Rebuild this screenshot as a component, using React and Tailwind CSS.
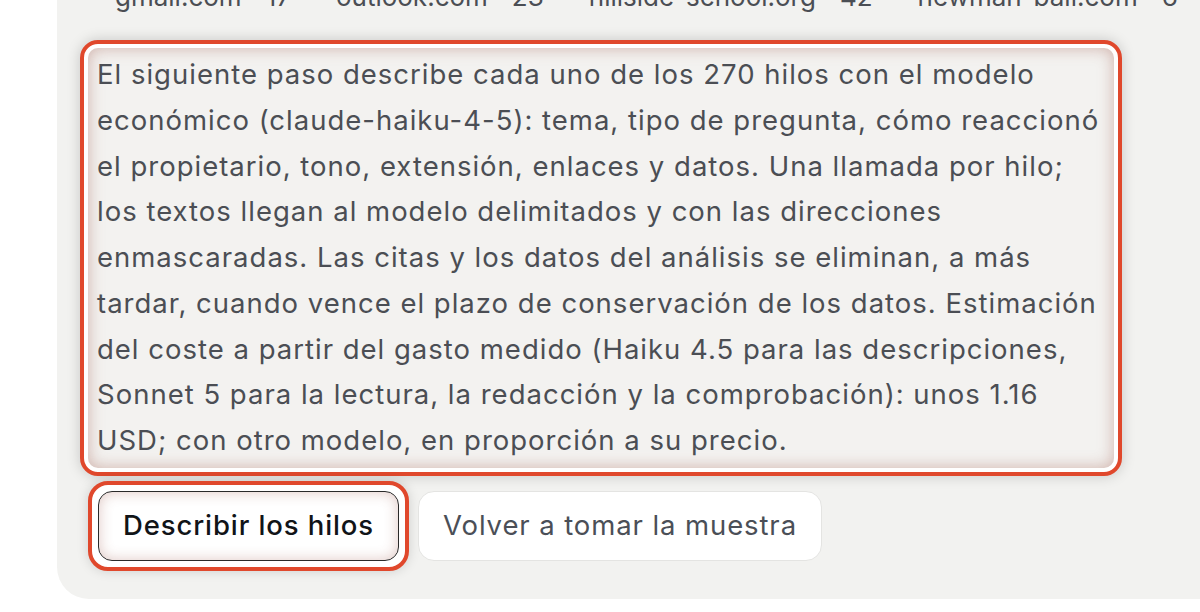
import React from 'react';

const domains = [
  { name: 'gmail.com', count: 17 },
  { name: 'outlook.com', count: 23 },
  { name: 'hillside-school.org', count: 42 },
  { name: 'newman-ball.com', count: 6 },
];

const lines = [
  'El siguiente paso describe cada uno de los 270 hilos con el modelo',
  'económico (claude-haiku-4-5): tema, tipo de pregunta, cómo reaccionó',
  'el propietario, tono, extensión, enlaces y datos. Una llamada por hilo;',
  'los textos llegan al modelo delimitados y con las direcciones',
  'enmascaradas. Las citas y los datos del análisis se eliminan, a más',
  'tardar, cuando vence el plazo de conservación de los datos. Estimación',
  'del coste a partir del gasto medido (Haiku 4.5 para las descripciones,',
  'Sonnet 5 para la lectura, la redacción y la comprobación): unos 1.16',
  'USD; con otro modelo, en proporción a su precio.',
];

export default function App() {
  return (
    <div className="h-[612px] overflow-hidden bg-white pl-[57px] font-['Inter',sans-serif]">
      <div className="bg-[#f2f2f0] rounded-bl-[32px] pl-[23px] pb-[28px]">
        {/* fila de dominios, cortada arriba */}
        <div className="-mt-[26px] flex items-center gap-[45px] pl-[35px] text-[26px] leading-[46px] text-[#4b4e54] whitespace-nowrap">
          {domains.map(d => (
            <div key={d.name} className="flex items-center gap-[24px]">
              <span>{d.name}</span>
              <span>{d.count}</span>
            </div>
          ))}
        </div>

        {/* bloque resaltado */}
        <div className="mt-[20px] w-[1042px] rounded-[18px] border-4 border-[#e0482c] bg-white p-[4px] shadow-[0_0_14px_rgba(0,0,0,0.18)]">
          <div className="rounded-[10px] bg-[#f3f2f0] pl-[9px] pt-[4px] pb-[4px] shadow-[inset_0_0_16px_rgba(150,70,55,0.38)] text-[27.5px] tracking-[1px] leading-[45.75px] text-[#4b4e54] whitespace-nowrap">
            {lines.map((l, i) => <div key={i}>{l}</div>)}
          </div>
        </div>

        {/* botones */}
        <div className="mt-[5px] ml-[8px] flex items-center gap-[9px]">
          <div className="rounded-[20px] border-4 border-[#e0482c] bg-white p-[6px] shadow-[0_0_12px_rgba(0,0,0,0.15)]">
            <button className="h-[70px] w-[301px] rounded-[14px] border-[1.5px] border-[#2a2a2a] bg-white text-[27.5px] tracking-[0.9px] font-medium text-[#111418] shadow-[inset_0_0_14px_rgba(150,70,55,0.3)]">
              Describir los hilos
            </button>
          </div>
          <button className="h-[70px] w-[404px] rounded-[16px] border border-[#e4e4e2] bg-white text-[27.5px] tracking-[0.9px] text-[#4b4f57]">
            Volver a tomar la muestra
          </button>
        </div>
      </div>
    </div>
  );
}
